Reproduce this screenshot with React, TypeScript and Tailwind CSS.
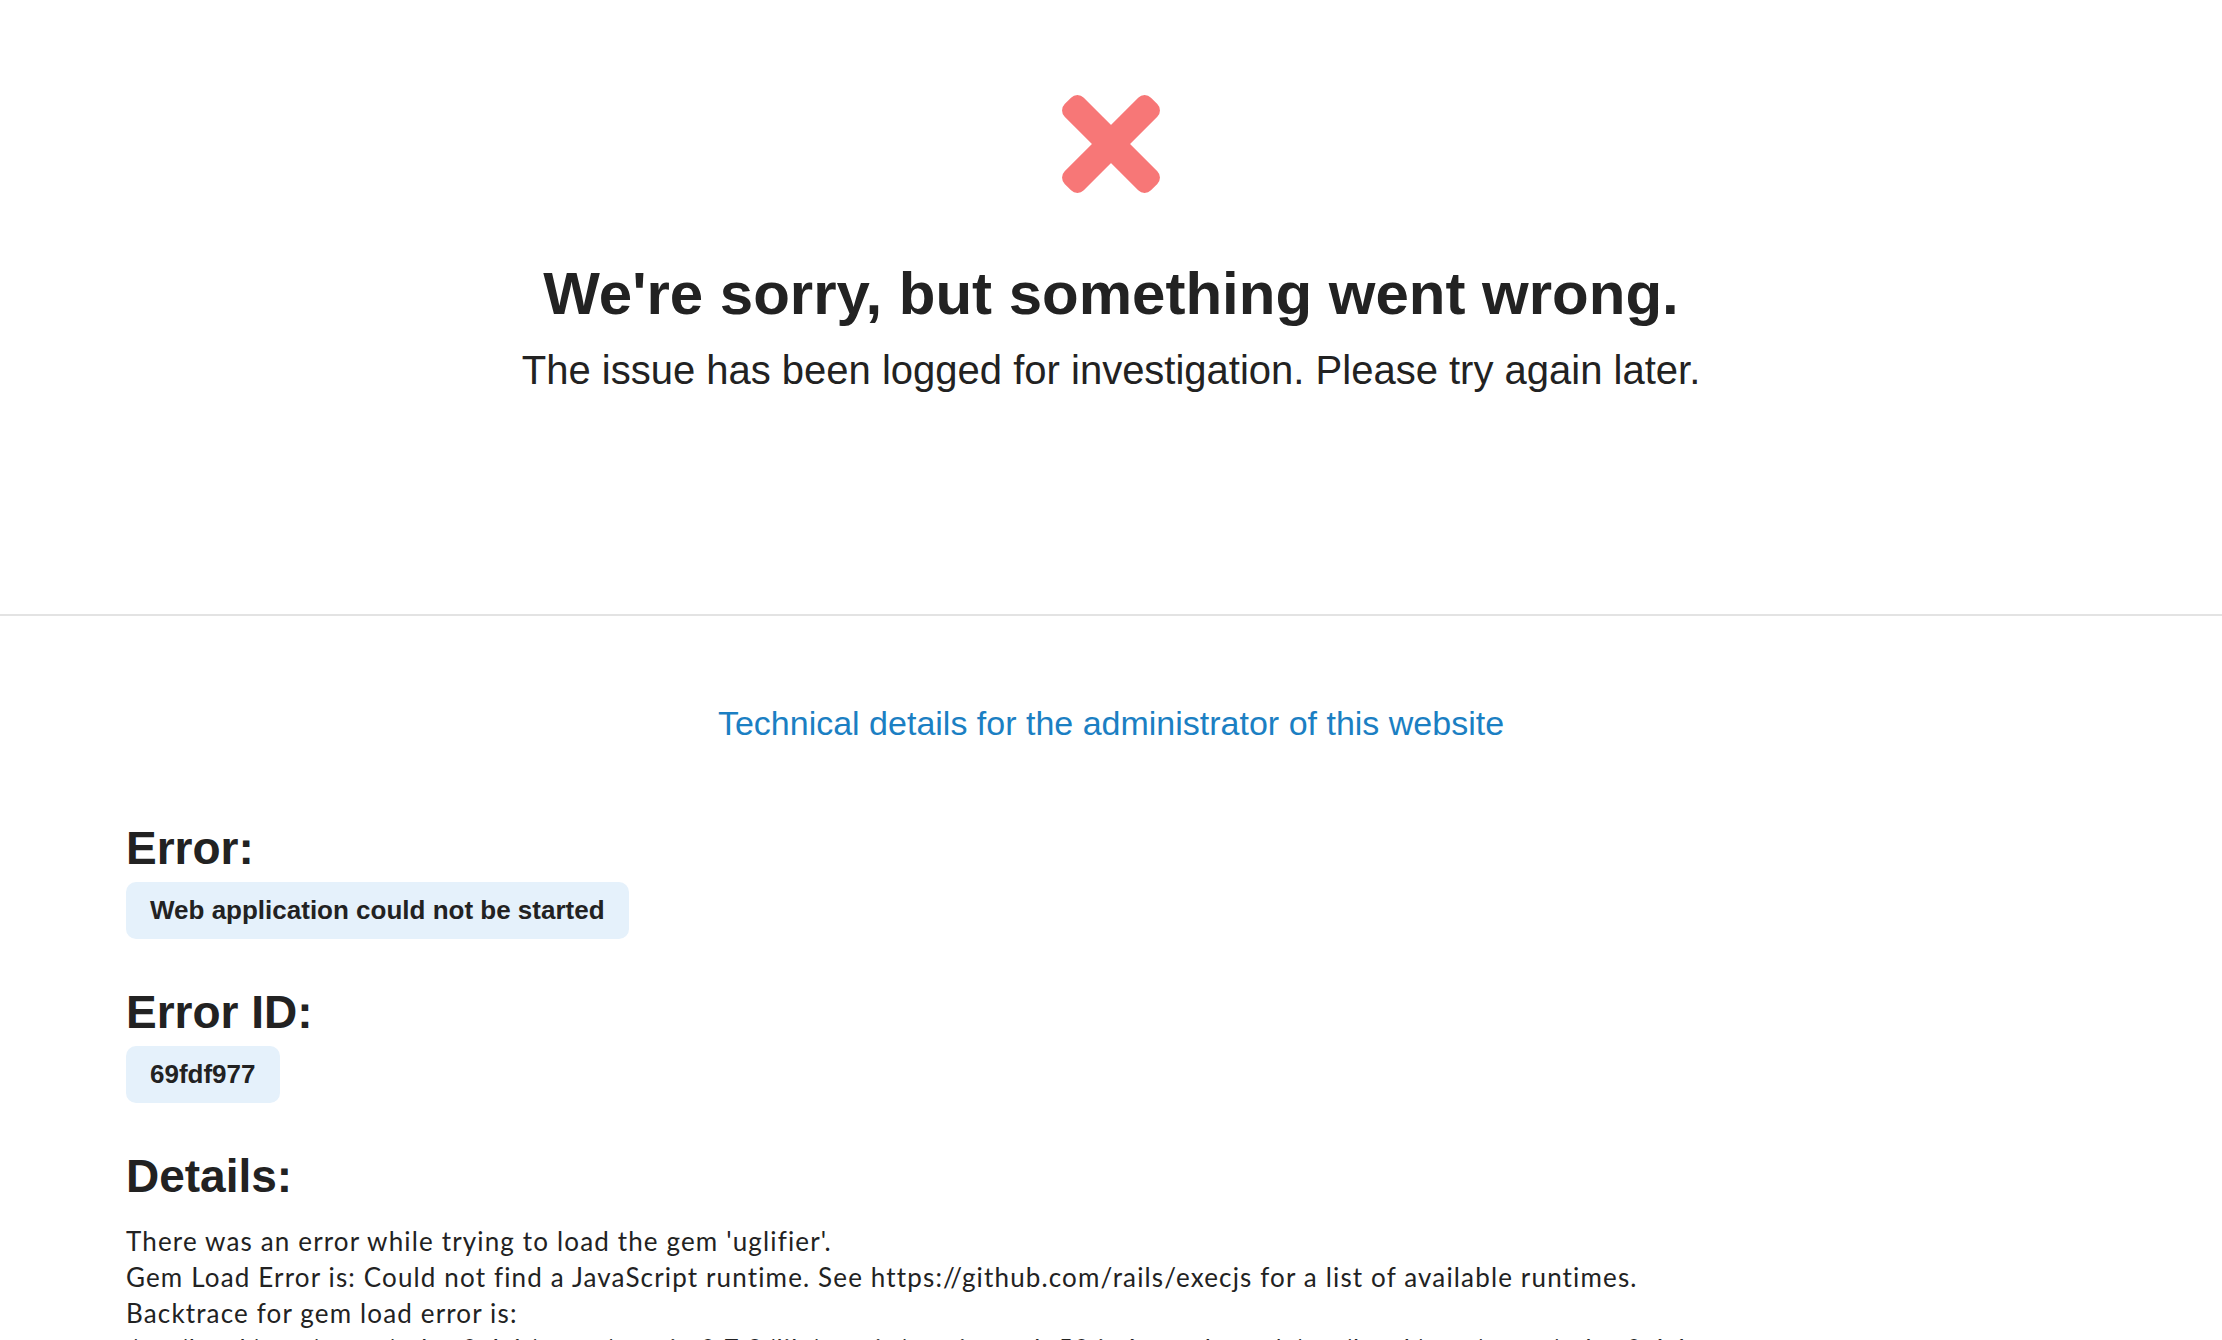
import React from 'react';

const details = [
    "There was an error while trying to load the gem 'uglifier'.",
    'Gem Load Error is: Could not find a JavaScript runtime. See https://github.com/rails/execjs for a list of available runtimes.',
    'Backtrace for gem load error is:',
    "/usr/local/rvm/gems/ruby-2.4.1/gems/execjs-2.7.0/lib/execjs/runtimes.rb:58:in `autodetect' /usr/local/rvm/gems/ruby-2.4.1",
];

const ErrorMark: React.FC = () => (
    // Rounded red cross
    <svg width="98" height="98" viewBox="0 0 98 98" className="overflow-visible">
        <rect x="-12" y="35.5" width="122" height="27" rx="9" fill="#f77777" transform="rotate(45 49 49)" />
        <rect x="-12" y="35.5" width="122" height="27" rx="9" fill="#f77777" transform="rotate(-45 49 49)" />
    </svg>
);

const Badge: React.FC<{ children: React.ReactNode }> = ({ children }) => (
    <div className="inline-block mt-2 rounded-[10px] bg-[#e5f1fb] px-6 py-[13px] text-[26px] leading-[31px] font-bold">
        {children}
    </div>
);

export default function App() {
    return (
        <div className="min-h-screen bg-white text-[#222] font-['Liberation_Sans',Arial,sans-serif]">
            {/* Top: message */}
            <div className="flex flex-col items-center pt-[95px] pb-[220px] border-b-2 border-[#e3e3e3]">
                <ErrorMark />
                <h1 className="mt-[65px] text-[60px] leading-[72px] font-bold">We're sorry, but something went wrong.</h1>
                <p className="mt-4 text-[40px] leading-[48px]">The issue has been logged for investigation. Please try again later.</p>
            </div>

            {/* Bottom: technical details */}
            <div className="flex flex-col">
                <a href="#" className="self-center mt-[87px] text-[34px] leading-[40px] text-[#1b7fc3]">
                    Technical details for the administrator of this website
                </a>

                <div className="pl-[126px] mt-[79px]">
                    <h2 className="text-[46px] leading-[52px] font-bold">Error:</h2>
                    <Badge>Web application could not be started</Badge>

                    <h2 className="mt-[47px] text-[46px] leading-[52px] font-bold">Error ID:</h2>
                    <Badge>69fdf977</Badge>

                    <h2 className="mt-[47px] text-[46px] leading-[52px] font-bold">Details:</h2>
                    <div className="mt-[21px] font-['Lato',sans-serif] text-[26px] leading-[36px] tracking-[1.15px] whitespace-nowrap">
                        {details.map((line) => (
                            <div key={line}>{line}</div>
                        ))}
                    </div>
                </div>
            </div>
        </div>
    );
}
